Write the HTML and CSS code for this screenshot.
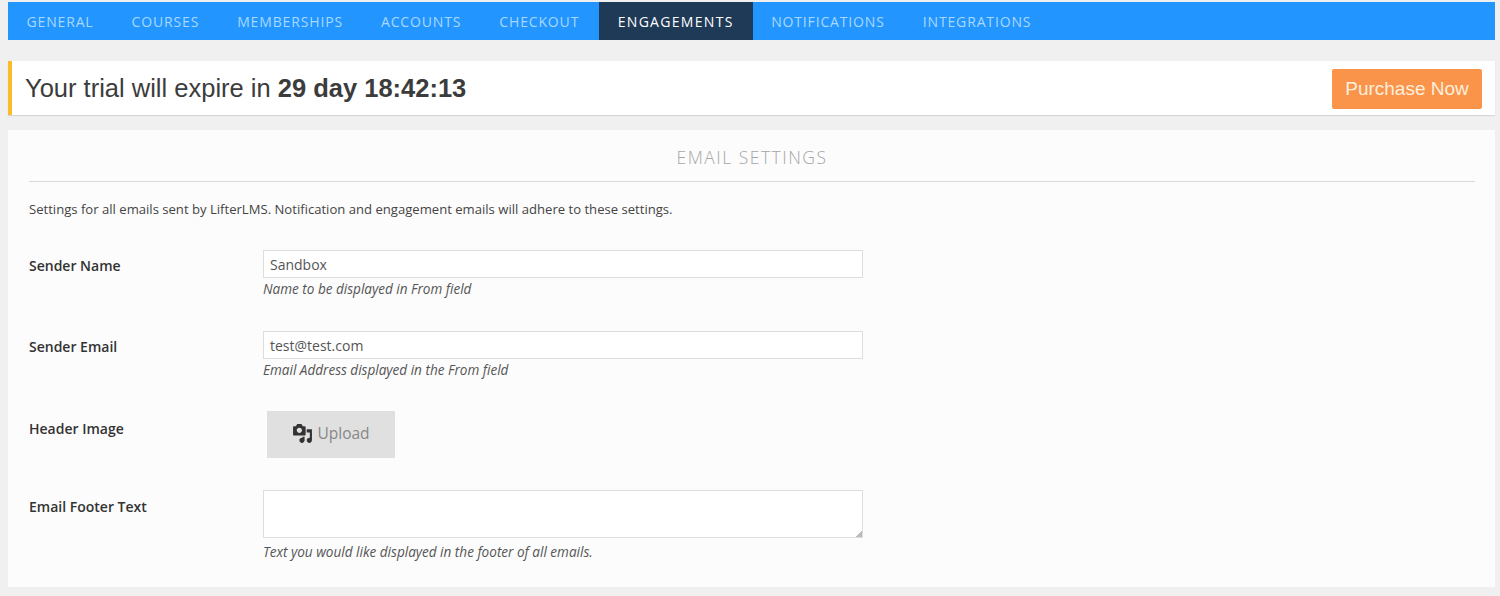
FILE: index.html
```html
<!DOCTYPE html>
<html lang="en">
<head>
<meta charset="utf-8">
<title>Email Settings</title>
<link rel="stylesheet" href="styles.css">
</head>
<body>
<nav class="tabs">
  <a class="tab">GENERAL</a>
  <a class="tab">COURSES</a>
  <a class="tab">MEMBERSHIPS</a>
  <a class="tab">ACCOUNTS</a>
  <a class="tab">CHECKOUT</a>
  <a class="tab active">ENGAGEMENTS</a>
  <a class="tab">NOTIFICATIONS</a>
  <a class="tab">INTEGRATIONS</a>
</nav>
<div class="notice">
  <p class="notice-text">Your trial will expire in <strong>29 day 18:42:13</strong></p>
  <a class="buy">Purchase Now</a>
</div>
<main class="panel">
  <h2 class="title">EMAIL SETTINGS</h2>
  <p class="intro">Settings for all emails sent by LifterLMS. Notification and engagement emails will adhere to these settings.</p>
  <div class="row row-name">
    <label class="label">Sender Name</label>
    <div class="field">
      <div class="input">Sandbox</div>
      <p class="hint">Name to be displayed in From field</p>
    </div>
  </div>
  <div class="row row-email">
    <label class="label">Sender Email</label>
    <div class="field">
      <div class="input">test@test.com</div>
      <p class="hint">Email Address displayed in the From field</p>
    </div>
  </div>
  <div class="row row-image">
    <label class="label">Header Image</label>
    <div class="field">
      <a class="upload">
        <svg class="upload-icon" viewBox="0 0 20 20" aria-hidden="true">
          <path d="M13 11V4c0-.55-.45-1-1-1h-1.670L9 1H5L3.670 3H2c-.55 0-1 .45-1 1v7c0 .55.45 1 1 1h10c.55 0 1-.45 1-1zM7 4.500c1.380 0 2.500 1.120 2.500 2.500S8.380 9.500 7 9.500 4.500 8.380 4.500 7 5.620 4.500 7 4.500zM14 6h5v10.500c0 1.380-1.120 2.500-2.500 2.500S14 17.880 14 16.500s1.120-2.500 2.500-2.500c.17 0 .34.020.5.050V9h-3V6zm-4 8.050V13h2v3.500c0 1.380-1.120 2.500-2.500 2.500S7 17.880 7 16.500 8.120 14 9.500 14c.17 0 .34.020.5.050z"/>
        </svg>
        <span class="upload-text">Upload</span>
      </a>
    </div>
  </div>
  <div class="row row-footer">
    <label class="label">Email Footer Text</label>
    <div class="field">
      <div class="textarea"><span class="grip"></span></div>
      <p class="hint">Text you would like displayed in the footer of all emails.</p>
    </div>
  </div>
</main>
</body>
</html>
```
FILE: styles.css
```css
* { box-sizing: border-box; }
html, body { margin: 0; height: 596px; overflow: hidden; }
body {
  background: #f0f0f1;
  padding: 2px 5px 0 8px;
  font-family: "Open Sans", sans-serif;
  color: #444;
}
p, h2 { margin: 0; }

.tabs {
  display: flex;
  height: 38px;
  background: #2295ff;
}
.tab {
  display: flex;
  align-items: center;
  padding: 0 19.500px 0 18.500px;
  font-size: 14px;
  letter-spacing: 0.85px;
  color: #a9d8ff;
}
.tab.active {
  padding: 0 19px;
  background: #1f3a57;
  color: #fff;
  letter-spacing: 1.300px;
}

.notice {
  display: flex;
  align-items: center;
  justify-content: space-between;
  height: 54px;
  margin-top: 21px;
  padding: 1px 13px 0;
  background: #fff;
  border-left: 4px solid #fbbc2c;
  box-shadow: 0 1px 1px rgba(0, 0, 0, .1);
}
.notice-text {
  font-family: "Liberation Sans", Arial, sans-serif;
  font-size: 25.500px;
  margin-top: -1px;
  color: #3c3c3c;
}
.buy {
  display: flex;
  align-items: center;
  justify-content: center;
  width: 150px;
  height: 40px;
  background: #f9944a;
  border-radius: 2px;
  font-family: "Liberation Sans", Arial, sans-serif;
  font-size: 19px;
  color: #fdeedd;
}

.panel {
  height: 457px;
  margin-top: 15px;
  padding: 0 20px 0 21px;
  background: #fcfcfc;
}
.title {
  height: 52px;
  padding-top: 15px;
  border-bottom: 1px solid #d9d9d9;
  text-align: center;
  font-size: 17.500px;
  font-weight: 300;
  letter-spacing: 1.500px;
  line-height: 24px;
  color: #a5a5a5;
}
.intro {
  margin-top: 19px;
  font-size: 13.100px;
  line-height: 17px;
  color: #444;
}

.row { display: flex; }
.label {
  width: 234px;
  flex: none;
  font-size: 14px;
  font-weight: 600;
  line-height: 20px;
  color: #333;
}
.field { width: 600px; }
.row-name { margin-top: 32px; }
.row-email { margin-top: 32px; }
.row-image { margin-top: 31px; }
.row-footer { margin-top: 32px; }
.row-name .label, .row-email .label { padding-top: 6px; }
.row-image .label { padding-top: 8px; }
.row-footer .label { padding-top: 7px; }

.input {
  height: 28px;
  padding: 0 6px;
  background: #fff;
  border: 1px solid #ddd;
  font-size: 14px;
  line-height: 27px;
  color: #555;
}
.hint {
  margin-top: 1px;
  font-size: 13.550px;
  font-style: italic;
  line-height: 20px;
  color: #555;
}
.upload {
  display: flex;
  align-items: center;
  justify-content: center;
  gap: 4px;
  width: 128px;
  height: 47px;
  margin-left: 4px;
  background: #e0e0e0;
  font-size: 15.500px;
  color: #888;
}
.upload-text { margin-top: -3px; }
.upload-icon { width: 21px; height: 21px; margin-top: -3px; fill: #333; }
.textarea {
  position: relative;
  height: 48px;
  background: #fff;
  border: 1px solid #ddd;
}
.grip {
  position: absolute;
  right: 0;
  bottom: 0;
  width: 6px;
  height: 6px;
  background: linear-gradient(135deg, transparent 50%, #bbb 50%);
}
.row-footer .hint { margin-top: 4px; }
```
